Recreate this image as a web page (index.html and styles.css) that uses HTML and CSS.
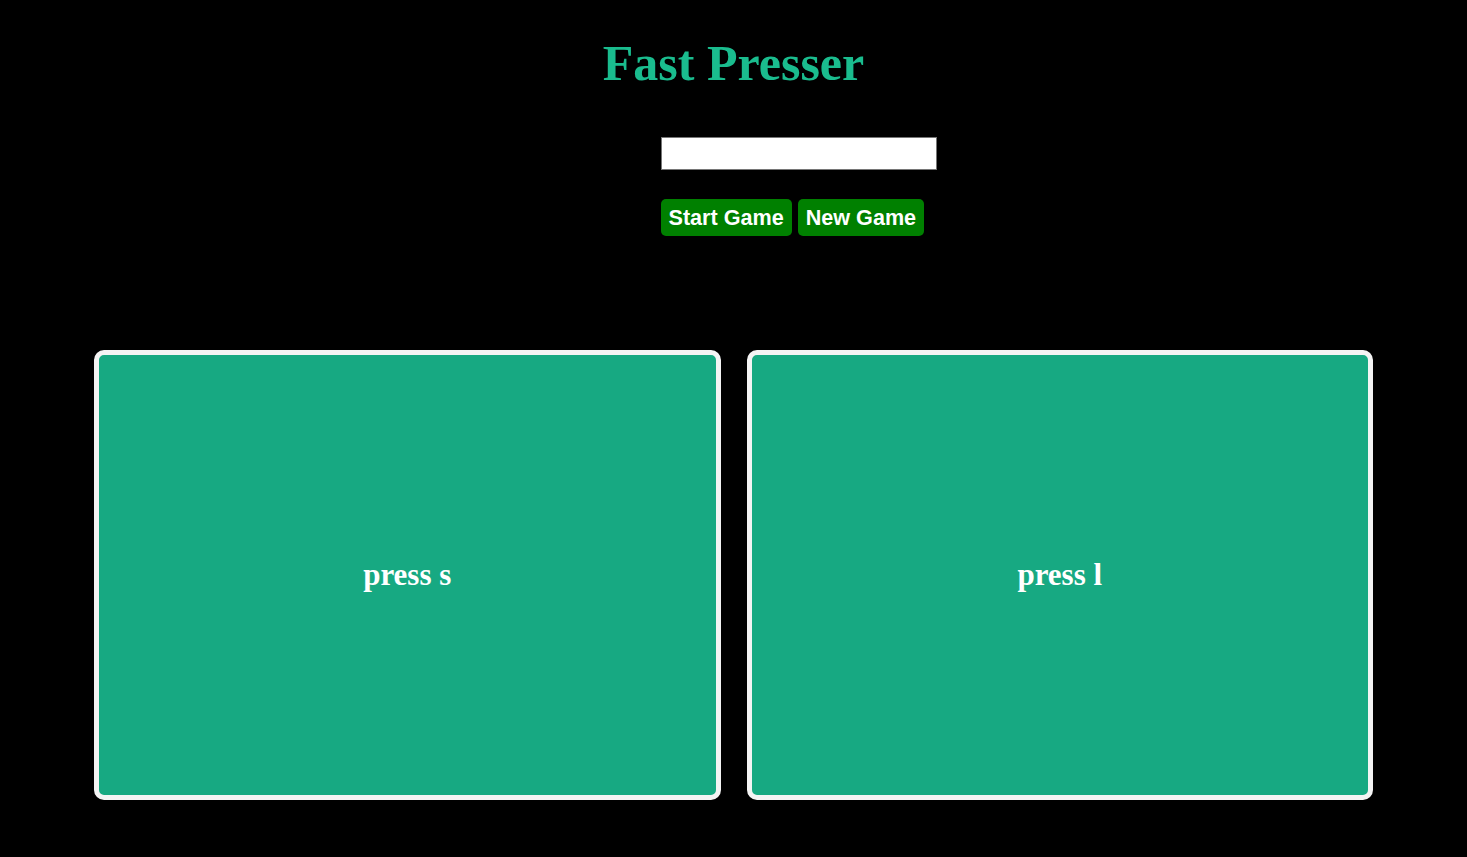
FILE: index.html
```html
<!DOCTYPE html>
<html>
<head>
  <link rel="stylesheet" href="styles.css">
</head>
<body>
  <h1 class="title">Fast Presser</h1>

  <div class="controls">
    <input type="text" id="player-name" class="name-input">
    <div class="button-row">
      <button class="game-button" id="start-button">Start Game</button>
      <button class="game-button" id="new-button">New Game</button>
    </div>
  </div>

  <div class="boards">
    <div class="board" id="board-s">
      <span class="board-label">press s</span>
    </div>
    <div class="board" id="board-l">
      <span class="board-label">press l</span>
    </div>
  </div>
</body>
</html>
```

FILE: styles.css
```css
body {
  margin: 0;
  padding: 0;
  background-color: #000;
  font-family: "Liberation Serif", "Times New Roman", serif;
}

.title {
  margin: 34px 0 0;
  font-size: 50px;
  line-height: 58px;
  font-weight: 700;
  text-align: center;
  color: #1abc8e;
}

.controls {
  margin: 45px 0 0 calc(50% - 73px);
  width: 276px;
}

.name-input {
  display: block;
  box-sizing: border-box;
  width: 276px;
  height: 33px;
  margin: 0;
  padding: 2px 6px;
  border: 1px solid #767676;
  background-color: #fff;
  font-size: 16px;
}

.button-row {
  display: flex;
  gap: 6px;
  margin-top: 29px;
}

.game-button {
  height: 37px;
  padding: 0 8px;
  border: none;
  border-radius: 5px;
  background-color: #008000;
  color: #fff;
  font-family: "Liberation Sans", Arial, sans-serif;
  font-size: 21.6px;
  font-weight: 700;
  cursor: pointer;
}

#new-button {
  padding: 0 8px;
}

.boards {
  display: flex;
  gap: 26px;
  margin: 114px 94px 0;
}

.board {
  flex: 1;
  height: 450px;
  box-sizing: border-box;
  border: 5px solid #f4f4f4;
  border-radius: 10px;
  background-color: #17a982;
  display: flex;
  align-items: center;
  justify-content: center;
}

.board-label {
  color: #fff;
  font-size: 31px;
  font-weight: 700;
}
```
